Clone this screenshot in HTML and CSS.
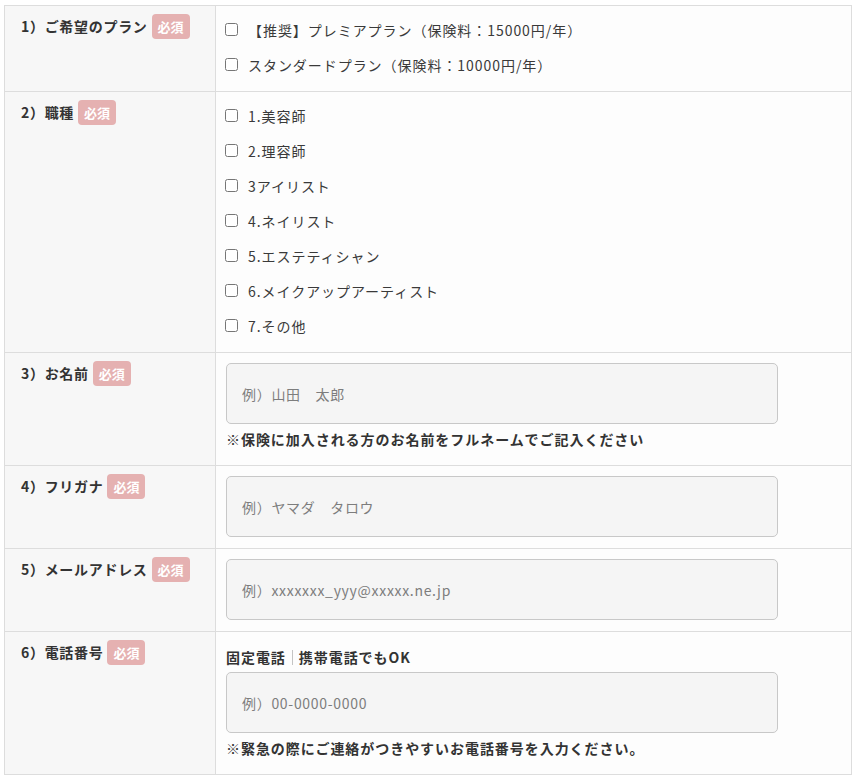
FILE: index.html
```html
<!DOCTYPE html>
<html lang="ja">
<head>
<meta charset="utf-8">
<title>お申し込みフォーム</title>
<link rel="stylesheet" href="styles.css">
</head>
<body>
<div class="wrap">
<table class="form">
  <tr>
    <th><div class="th-in"><span>1）ご希望のプラン</span><span class="req">必須</span></div></th>
    <td class="opts">
      <label class="opt"><input type="checkbox"><span>【推奨】プレミアプラン（保険料：15000円/年）</span></label>
      <label class="opt"><input type="checkbox"><span>スタンダードプラン（保険料：10000円/年）</span></label>
    </td>
  </tr>
  <tr>
    <th><div class="th-in"><span>2）職種</span><span class="req">必須</span></div></th>
    <td class="opts">
      <label class="opt"><input type="checkbox"><span>1.美容師</span></label>
      <label class="opt"><input type="checkbox"><span>2.理容師</span></label>
      <label class="opt"><input type="checkbox"><span>3アイリスト</span></label>
      <label class="opt"><input type="checkbox"><span>4.ネイリスト</span></label>
      <label class="opt"><input type="checkbox"><span>5.エステティシャン</span></label>
      <label class="opt"><input type="checkbox"><span>6.メイクアップアーティスト</span></label>
      <label class="opt"><input type="checkbox"><span>7.その他</span></label>
    </td>
  </tr>
  <tr>
    <th><div class="th-in"><span>3）お名前</span><span class="req">必須</span></div></th>
    <td class="field">
      <input class="text" type="text" placeholder="例）山田　太郎">
      <p class="note">※保険に加入される方のお名前をフルネームでご記入ください</p>
    </td>
  </tr>
  <tr>
    <th><div class="th-in"><span>4）フリガナ</span><span class="req">必須</span></div></th>
    <td class="field">
      <input class="text" type="text" placeholder="例）ヤマダ　タロウ">
    </td>
  </tr>
  <tr>
    <th><div class="th-in"><span>5）メールアドレス</span><span class="req">必須</span></div></th>
    <td class="field">
      <input class="text" type="email" placeholder="例）xxxxxxx_yyy@xxxxx.ne.jp">
    </td>
  </tr>
  <tr>
    <th><div class="th-in"><span>6）電話番号</span><span class="req">必須</span></div></th>
    <td class="field">
      <p class="note">固定電話<span class="sep"></span>携帯電話でもOK</p>
      <input class="text" type="tel" placeholder="例）00-0000-0000">
      <p class="note">※緊急の際にご連絡がつきやすいお電話番号を入力ください。</p>
    </td>
  </tr>
</table>
</div>
</body>
</html>
```
FILE: styles.css
```css
html, body {
  margin: 0;
  padding: 0;
  background: #ffffff;
}
body {
  font-family: "Noto Sans CJK JP", "Noto Sans", sans-serif;
  font-size: 14px;
  color: #333333;
  letter-spacing: 0.068em;
}
.wrap {
  padding: 5px 0 0 4px;
}
.form {
  width: 848px;
  border-collapse: collapse;
  border: 1px solid #dddddd;
}
.form th,
.form td {
  border: 1px solid #dddddd;
  vertical-align: top;
  text-align: left;
}
.form th {
  width: 194px;
  background: #f7f7f7;
  padding: 8px 0 0 16px;
  font-weight: 700;
  letter-spacing: 0.05em;
}
.th-in {
  display: flex;
  align-items: center;
  gap: 4px;
  height: 25px;
  line-height: 25px;
}
.req {
  display: inline-block;
  height: 25px;
  line-height: 25px;
  padding: 0 6px;
  border-radius: 4px;
  background: #e5b1b1;
  color: #ffffff;
  font-size: 13px;
  font-weight: 700;
  letter-spacing: 0;
}
.form td {
  background: #fdfdfd;
}
.opts {
  padding: 6px 10px 9px 9px;
}
.opt {
  display: flex;
  align-items: center;
  height: 35px;
  gap: 10px;
  color: #3a3a3a;
}
.opt input {
  margin: 0;
  width: 13px;
  height: 13px;
}
.field {
  padding: 10px 11px 11px 10px;
}
.text {
  display: block;
  box-sizing: border-box;
  width: 552px;
  height: 61px;
  margin: 0;
  padding: 0 15px;
  border: 1px solid #c8c8c8;
  border-radius: 5px;
  background: #f5f5f5;
  font-family: inherit;
  font-size: 14px;
  letter-spacing: 0.05em;
  color: #333333;
}
.text::placeholder {
  color: #7d7d7d;
}
.note {
  margin: 0;
  height: 30px;
  line-height: 30px;
  font-weight: 700;
  color: #333333;
}
.sep {
  display: inline-block;
  width: 1px;
  height: 15px;
  background: #c4c4c4;
  margin: 0 6px;
  vertical-align: -2px;
}
```
